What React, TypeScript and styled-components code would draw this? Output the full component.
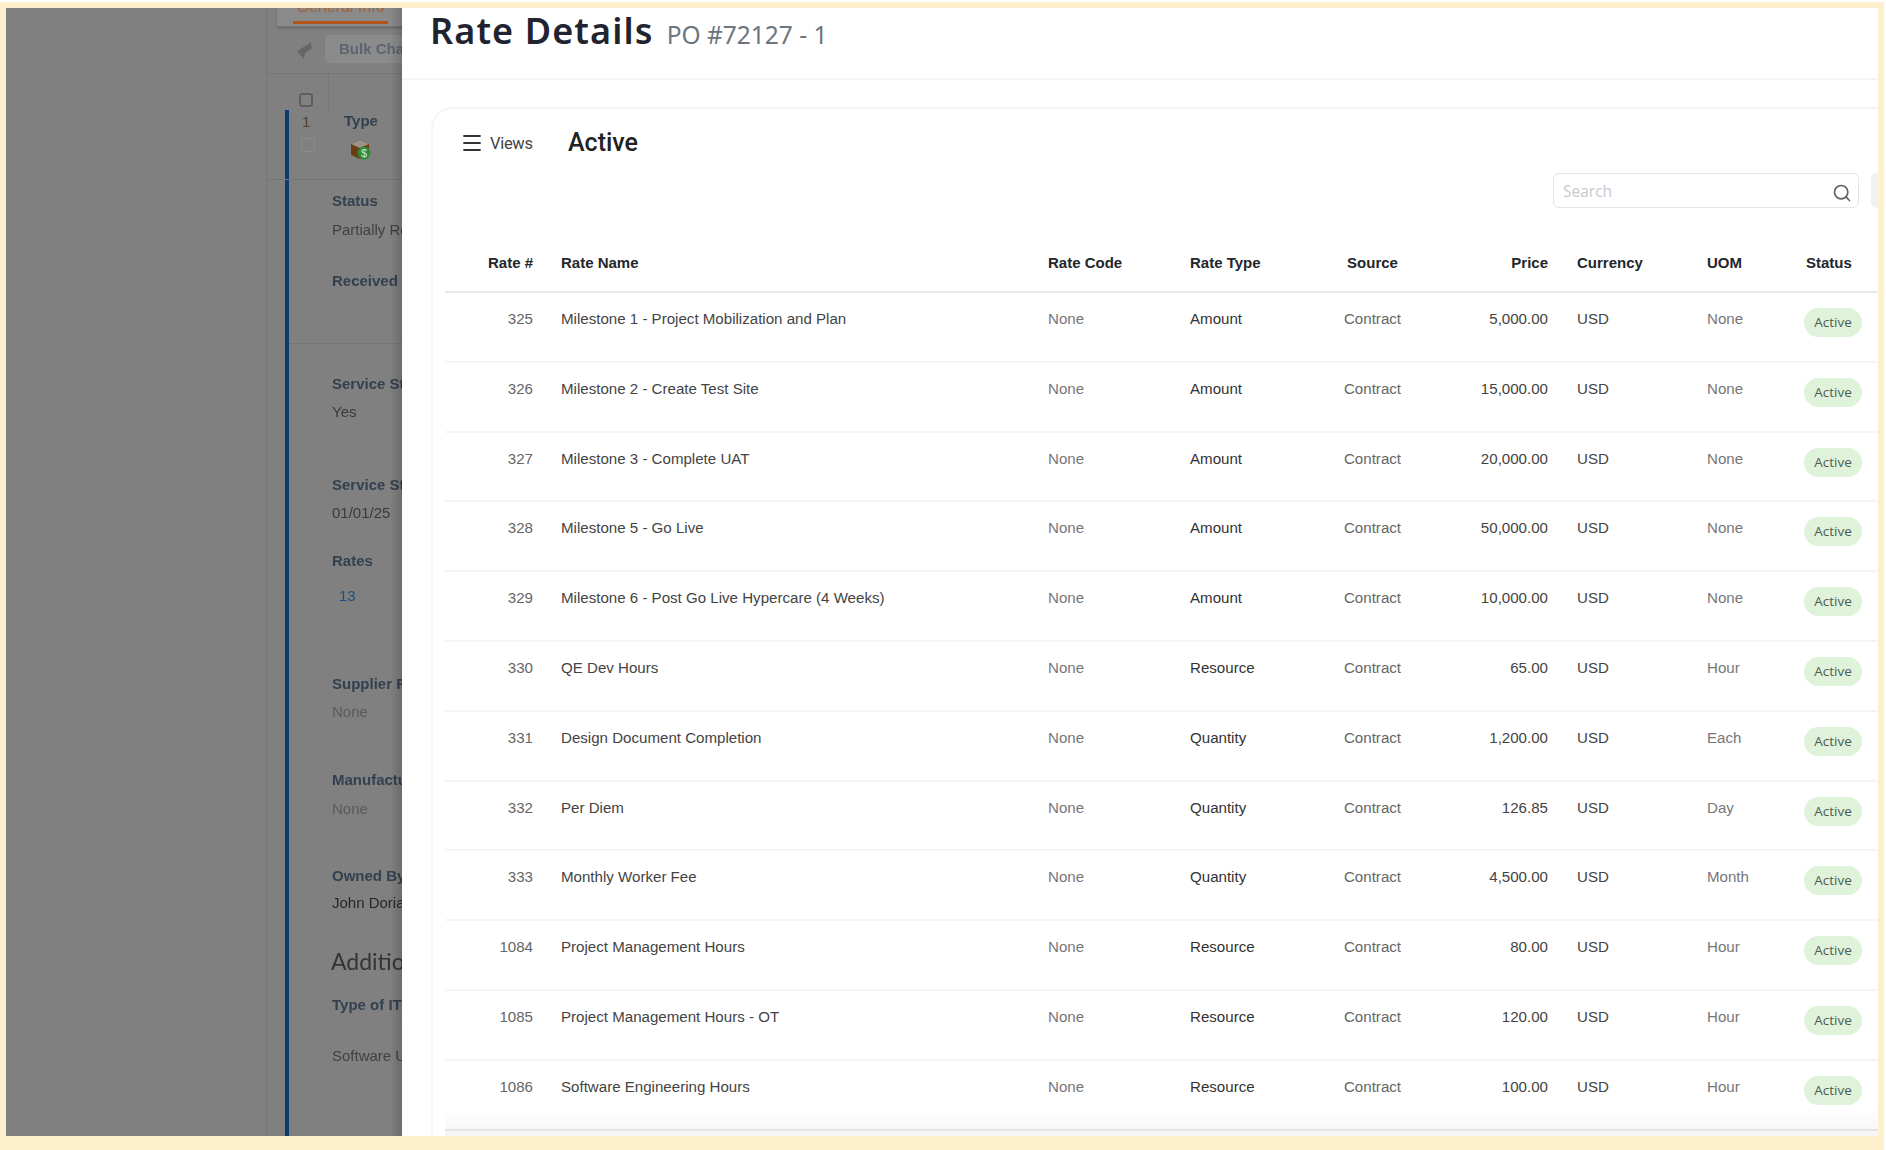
import styled, { createGlobalStyle } from "styled-components";
import { Menu, Search } from "lucide-react";

const GlobalStyle = createGlobalStyle`
  html, body {
    margin: 0;
    padding: 0;
    background: #ffffff;
  }
`;

const rates = [
  { id: "325", name: "Milestone 1 - Project Mobilization and Plan", type: "Amount", price: "5,000.00", uom: "None" },
  { id: "326", name: "Milestone 2 - Create Test Site", type: "Amount", price: "15,000.00", uom: "None" },
  { id: "327", name: "Milestone 3 - Complete UAT", type: "Amount", price: "20,000.00", uom: "None" },
  { id: "328", name: "Milestone 5 - Go Live", type: "Amount", price: "50,000.00", uom: "None" },
  { id: "329", name: "Milestone 6 - Post Go Live Hypercare (4 Weeks)", type: "Amount", price: "10,000.00", uom: "None" },
  { id: "330", name: "QE Dev Hours", type: "Resource", price: "65.00", uom: "Hour" },
  { id: "331", name: "Design Document Completion", type: "Quantity", price: "1,200.00", uom: "Each" },
  { id: "332", name: "Per Diem", type: "Quantity", price: "126.85", uom: "Day" },
  { id: "333", name: "Monthly Worker Fee", type: "Quantity", price: "4,500.00", uom: "Month" },
  { id: "1084", name: "Project Management Hours", type: "Resource", price: "80.00", uom: "Hour" },
  { id: "1085", name: "Project Management Hours - OT", type: "Resource", price: "120.00", uom: "Hour" },
  { id: "1086", name: "Software Engineering Hours", type: "Resource", price: "100.00", uom: "Hour" },
];

const Frame = styled.div`
  display: flex;
  box-sizing: border-box;
  width: 1884px;
  height: 1148px;
  margin-top: 2px;
  border-style: solid;
  border-color: #fff0cd;
  border-width: 6px 6px 14px 6px;
  overflow: hidden;
  font-family: "Liberation Sans", Arial, sans-serif;
`;

/* dimmed page behind the drawer */
const Backdrop = styled.div`
  position: relative;
  flex: 0 0 396px;
  display: flex;
  padding-left: 260px;
  box-sizing: border-box;
  background: #808080;
  overflow: hidden;
  filter: blur(0.5px);
  &::after {
    content: "";
    position: absolute;
    top: 0;
    bottom: 0;
    right: 0;
    width: 12px;
    background: linear-gradient(90deg, rgba(0, 0, 0, 0), rgba(0, 0, 0, 0.16));
  }
`;

const Sheet = styled.div`
  flex: 1;
  min-width: 0;
  display: flex;
  flex-direction: column;
  border-left: 1px solid #767676;
`;

const TabStrip = styled.div`
  flex: 0 0 19px;
  display: flex;
  align-items: flex-end;
  padding-left: 10px;
`;

const Tab = styled.div`
  flex: 0 0 140px;
  height: 19px;
  box-sizing: border-box;
  padding-left: 16px;
  background: #8a8a8a;
  border-bottom: 1px solid #777777;
  box-shadow: 0 1px 2px rgba(0, 0, 0, 0.25);
  overflow: hidden;
`;

const TabLabel = styled.div`
  width: 95px;
  height: 17px;
  box-sizing: border-box;
  margin-top: -1px;
  border-bottom: 3px solid #b0541a;
  color: #a5602f;
  font-size: 16px;
  line-height: 0;
  white-space: nowrap;
  text-align: center;
`;

const Toolbar = styled.div`
  flex: 0 0 47px;
  display: flex;
  align-items: center;
  box-sizing: border-box;
  padding: 0 0 0 30px;
  border-bottom: 1px solid #767676;
  gap: 12px;
  svg {
    flex: none;
  }
`;

const BulkButton = styled.div`
  flex: 0 0 140px;
  height: 28px;
  box-sizing: border-box;
  padding-left: 14px;
  border-radius: 5px;
  background: #8b8b8b;
  color: #5c6470;
  font-size: 15px;
  font-weight: 700;
  line-height: 28px;
  white-space: nowrap;
  margin-top: -2px;
`;

const GridHead = styled.div`
  flex: 0 0 36px;
  display: flex;
  align-items: flex-end;
`;

const GridHeadCell = styled.div`
  width: 62px;
  height: 36px;
  box-sizing: border-box;
  padding: 19px 0 0 32px;
  border-right: 1px solid #767676;
`;

const Check = styled.div<{ $faint?: boolean }>`
  width: 14px;
  height: 14px;
  box-sizing: border-box;
  border-radius: 3px;
  border: ${(p) => (p.$faint ? "1.5px solid #8c8c8c" : "2px solid #5f5f5f")};
`;

const Record = styled.div`
  flex: 1;
  display: flex;
  flex-direction: column;
  border-left: 4px solid #0e3a73;
  margin-left: 18px;
`;

const RecordHead = styled.div`
  flex: 0 0 70px;
  display: flex;
  box-sizing: border-box;
  margin-left: -22px;
  padding-left: 34px;
  border-bottom: 1px solid #767676;
`;

const IndexCell = styled.div`
  width: 43px;
  display: flex;
  flex-direction: column;
  align-items: flex-start;
  padding-top: 3px;
  gap: 8px;
`;

const IndexNumber = styled.div`
  padding-left: 1px;
  color: #4d4034;
  font-size: 15px;
  line-height: 17px;
`;

const TypeCell = styled.div`
  display: flex;
  flex-direction: column;
  align-items: center;
  padding-top: 1px;
  gap: 9px;
`;

const Section = styled.div<{ $top: number; $bottom?: number; $rule?: boolean }>`
  padding: ${(p) => p.$top}px 0 ${(p) => p.$bottom ?? 0}px 43px;
  border-bottom: ${(p) => (p.$rule ? "1px solid #767676" : "none")};
`;

const Label = styled.div<{ $mt?: number }>`
  margin-top: ${(p) => p.$mt ?? 0}px;
  color: #33404f;
  font-size: 15px;
  font-weight: 700;
  line-height: 20px;
  white-space: nowrap;
`;

const Value = styled.div<{ $mt?: number; $tone?: string; $indent?: number }>`
  margin-top: ${(p) => p.$mt ?? 8}px;
  padding-left: ${(p) => p.$indent ?? 0}px;
  color: ${(p) => p.$tone ?? "#404040"};
  font-size: 15px;
  line-height: 20px;
  white-space: nowrap;
`;

const GroupTitle = styled.div`
  margin-top: 33px;
  margin-left: -1px;
  color: #343434;
  font-family: Lato, "Liberation Sans", sans-serif;
  font-size: 23px;
  line-height: 30px;
  white-space: nowrap;
`;

/* drawer */
const Drawer = styled.div`
  position: relative;
  flex: 1;
  min-width: 0;
  display: flex;
  flex-direction: column;
  background: #ffffff;
  overflow: hidden;
`;

const DrawerHeader = styled.div`
  flex: 0 0 72px;
  display: flex;
  align-items: baseline;
  box-sizing: border-box;
  padding: 1px 0 0 28px;
  gap: 13px;
  border-bottom: 2px solid #f5f5f5;
`;

const Title = styled.h1`
  margin: 0;
  color: #1f2430;
  font-family: "Noto Sans", sans-serif;
  font-size: 36px;
  font-weight: 600;
  letter-spacing: 1.1px;
  line-height: 44px;
`;

const Subtitle = styled.span`
  color: #6c757d;
  font-family: "Noto Sans", sans-serif;
  font-size: 24.5px;
`;

const Card = styled.div`
  flex: 1;
  display: flex;
  flex-direction: column;
  width: 1500px;
  box-sizing: border-box;
  margin: 27px 0 0 29px;
  padding: 0 0 0 12px;
  border: 2px solid #f5f5f5;
  border-bottom: none;
  border-right: none;
  border-top-left-radius: 22px;
`;

const ViewsBar = styled.div`
  flex: 0 0 48px;
  display: flex;
  align-items: flex-end;
  box-sizing: border-box;
  padding: 0 0 0 15px;
`;

const ViewsButton = styled.div`
  display: flex;
  align-items: center;
  gap: 6px;
  width: 108px;
  height: 28px;
  color: #444444;
  font-family: Roboto, sans-serif;
  font-size: 16.5px;
  letter-spacing: -0.3px;
`;

const ViewName = styled.div`
  color: #222222;
  font-family: Roboto, sans-serif;
  font-size: 25px;
  font-weight: 500;
  line-height: 28px;
`;

const SearchRow = styled.div`
  flex: 0 0 35px;
  display: flex;
  align-items: flex-start;
  margin-top: 16px;
  padding-left: 1108px;
  gap: 12px;
`;

const SearchBox = styled.div`
  display: flex;
  align-items: center;
  justify-content: space-between;
  width: 306px;
  height: 35px;
  box-sizing: border-box;
  padding: 0 6px 0 9px;
  border: 1.5px solid #e1e5ea;
  border-radius: 6px;
  color: #c6cacd;
  font-family: "Open Sans", sans-serif;
  font-size: 15.5px;
  svg {
    margin-top: 4px;
  }
`;

const SideButton = styled.div`
  width: 40px;
  height: 35px;
  border-radius: 6px;
  background: #eff1f3;
`;

const Row = styled.div<{ $head?: boolean; $last?: boolean }>`
  display: grid;
  grid-template-columns: 88px 515px 142px 132px 101px 125px 159px 97px 74px;
  box-sizing: border-box;
  height: ${(p) => (p.$head ? "85px" : "69.8px")};
  padding-top: ${(p) => (p.$head ? "45px" : "16px")};
  border-bottom: 2px solid ${(p) => (p.$head ? "#e6eaea" : p.$last ? "#e4e4e4" : "#f5f5f5")};
  background: ${(p) => (p.$last ? "linear-gradient(180deg, #ffffff 70%, #f8f8f8 100%)" : "transparent")};
  color: ${(p) => (p.$head ? "#23272b" : "#444444")};
  font-size: ${(p) => (p.$head ? "15px" : "15.1px")};
  font-weight: ${(p) => (p.$head ? 700 : 400)};
  line-height: 20px;
`;

const Cell = styled.div<{ $align?: "right" | "center"; $pad?: number; $tone?: string }>`
  padding-left: ${(p) => p.$pad ?? 0}px;
  text-align: ${(p) => p.$align ?? "left"};
  color: ${(p) => p.$tone ?? "inherit"};
  white-space: nowrap;
`;

const Badge = styled.div`
  width: 58px;
  height: 29px;
  margin-top: -1px;
  border-radius: 15px;
  background: #dff3da;
  color: #4f5b55;
  font-family: "Open Sans", sans-serif;
  font-size: 13.5px;
  line-height: 29px;
  text-align: center;
`;

const TableEnd = styled.div`
  flex: 1;
  background: #f5f5f5;
`;

const BackArrow = () => (
  <svg width="16" height="17" viewBox="0 0 16 17">
    <path d="M15 0 L0 9 L7 17 L8 11 Q11 8 16 6 Q12 4 15 0 Z" fill="#666666" />
  </svg>
);

const BoxIcon = () => (
  <svg width="22" height="20" viewBox="0 0 22 20">
    <path d="M10 0 L19 4 L19 15 L10 19 L1 15 L1 4 Z" fill="#6b3d12" />
    <path d="M10 0 L19 4 L10 8 L1 4 Z" fill="#9c9388" />
    <circle cx="14" cy="13" r="6.5" fill="#2f8a36" />
    <text x="14" y="17" fill="#d5ecd5" fontSize="11" fontFamily="Liberation Sans" textAnchor="middle">
      $
    </text>
  </svg>
);

const App = () => {
  return (
    <>
      <GlobalStyle />
      <Frame>
        <Backdrop>
          <Sheet>
            <TabStrip>
              <Tab>
                <TabLabel>General Info</TabLabel>
              </Tab>
            </TabStrip>
            <Toolbar>
              <BackArrow />
              <BulkButton>Bulk Change</BulkButton>
            </Toolbar>
            <GridHead>
              <GridHeadCell>
                <Check />
              </GridHeadCell>
            </GridHead>
            <Record>
              <RecordHead>
                <IndexCell>
                  <IndexNumber>1</IndexNumber>
                  <Check $faint />
                </IndexCell>
                <TypeCell>
                  <Label>Type</Label>
                  <BoxIcon />
                </TypeCell>
              </RecordHead>
              <Section $top={11} $bottom={52} $rule>
                <Label>Status</Label>
                <Value $mt={9}>Partially Received</Value>
                <Label $mt={31}>Received</Label>
              </Section>
              <Section $top={30}>
                <Label>Service Start</Label>
                <Value $mt={8} $tone="#3a3a3a">Yes</Value>
                <Label $mt={53}>Service Start Date</Label>
                <Value $mt={8} $tone="#3a3a3a">01/01/25</Value>
                <Label $mt={28}>Rates</Label>
                <Value $mt={15} $tone="#1d4f80" $indent={7}>13</Value>
                <Label $mt={68}>Supplier Facility</Label>
                <Value $tone="#5a5a5a">None</Value>
                <Label $mt={48}>Manufacturer</Label>
                <Value $mt={9} $tone="#5a5a5a">None</Value>
                <Label $mt={47}>Owned By</Label>
                <Value $mt={7} $tone="#262626">John Doria</Value>
                <GroupTitle>Additional</GroupTitle>
                <Label $mt={19}>Type of IT</Label>
                <Value $mt={31}>Software Update</Value>
              </Section>
            </Record>
          </Sheet>
        </Backdrop>
        <Drawer>
          <DrawerHeader>
            <Title>Rate Details</Title>
            <Subtitle>PO #72127 - 1</Subtitle>
          </DrawerHeader>
          <Card>
            <ViewsBar>
              <ViewsButton>
                <Menu size={24} strokeWidth={1.8} color="#333333" />
                Views
              </ViewsButton>
              <ViewName>Active</ViewName>
            </ViewsBar>
            <SearchRow>
              <SearchBox>
                Search
                <Search size={20} strokeWidth={2} color="#5b6167" />
              </SearchBox>
              <SideButton />
            </SearchRow>
            <Row $head>
              <Cell $align="right">Rate #</Cell>
              <Cell $pad={28}>Rate Name</Cell>
              <Cell>Rate Code</Cell>
              <Cell>Rate Type</Cell>
              <Cell $align="center">Source</Cell>
              <Cell $align="right">Price</Cell>
              <Cell $pad={29}>Currency</Cell>
              <Cell>UOM</Cell>
              <Cell $pad={2}>Status</Cell>
            </Row>
            {rates.map((rate, i) => (
              <Row key={rate.id} $last={i === rates.length - 1}>
                <Cell $align="right" $tone="#666666">{rate.id}</Cell>
                <Cell $pad={28}>{rate.name}</Cell>
                <Cell $tone="#777777">None</Cell>
                <Cell $tone="#333333">{rate.type}</Cell>
                <Cell $align="center" $tone="#666666">Contract</Cell>
                <Cell $align="right">{rate.price}</Cell>
                <Cell $pad={29}>USD</Cell>
                <Cell $tone="#777777">{rate.uom}</Cell>
                <Badge>Active</Badge>
              </Row>
            ))}
            <TableEnd />
          </Card>
        </Drawer>
      </Frame>
    </>
  );
};

export default App;
